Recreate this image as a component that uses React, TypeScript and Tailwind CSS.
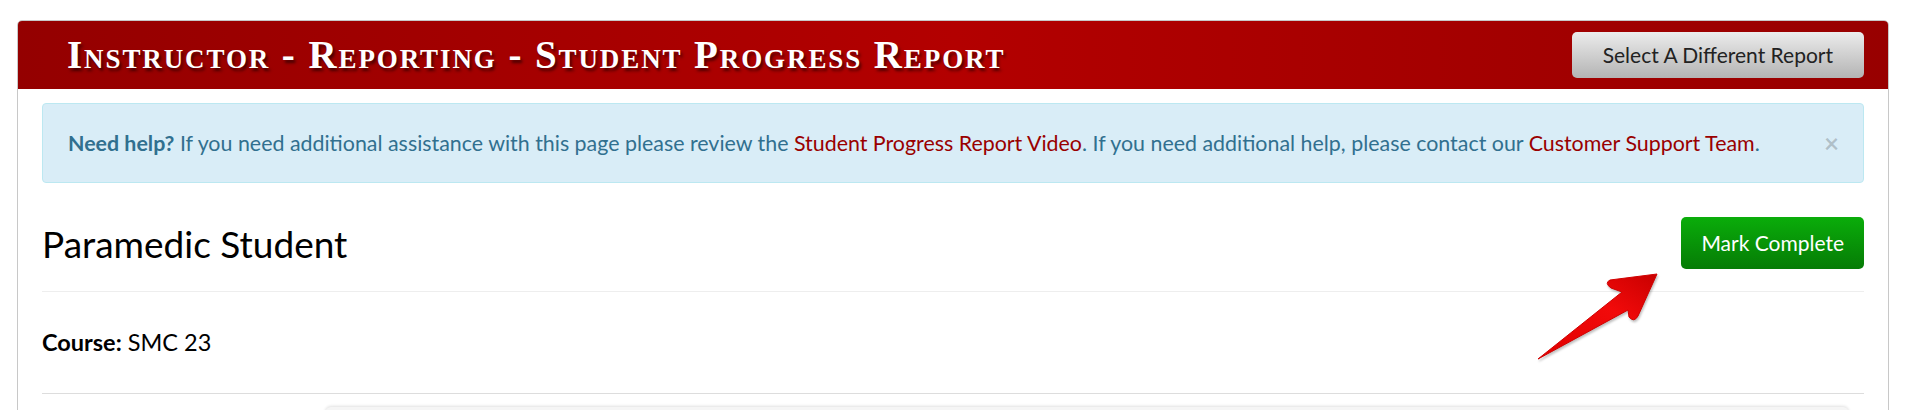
import React from "react";

const sans = "font-['Lato','Open_Sans',sans-serif]";

const Arrow = () => (
  <svg
    className="absolute left-[1530px] top-[266px] drop-shadow-[1px_2px_1px_rgba(0,0,0,0.25)]"
    width="136"
    height="100"
    viewBox="0 0 136 100"
  >
    <defs>
      <linearGradient id="arrowRed" x1="0" y1="1" x2="1" y2="0">
        <stop offset="0" stopColor="#e00000" />
        <stop offset="0.6" stopColor="#f20a0a" />
        <stop offset="1" stopColor="#c80000" />
      </linearGradient>
    </defs>
    <path
      d="M8,93 L92,26 L81,22 Q74,17 80,14 L127,8 L108,50 Q104,57 99,51 L98,44 Z"
      fill="url(#arrowRed)"
      stroke="#d00000"
      strokeWidth="1"
      strokeLinejoin="round"
    />
  </svg>
);

export default function App() {
  return (
    <div className={`relative min-h-[410px] bg-white pt-[20px] ${sans}`}>
      <div className="ml-[17px] mr-[27px] overflow-hidden rounded-t-[5px] border border-[#c8c8c8]">
        {/* header */}
        <div className="flex h-[68px] items-center justify-between bg-gradient-to-r from-[#940000] via-[#b30000] to-[#980000] pl-[49px] pr-[24px]">
          <h1 className="font-['Liberation_Serif',serif] text-[39px] font-bold tracking-[1.9px] text-white [font-variant-caps:small-caps] [text-shadow:2px_3px_3px_rgba(0,0,0,0.55)]">
            Instructor - Reporting - Student Progress Report
          </h1>
          <button className="h-[46px] rounded-[5px] bg-gradient-to-b from-[#ececec] to-[#b4b4b4] px-[31px] text-[21px] text-[#222]">
            Select A Different Report
          </button>
        </div>

        <div className="px-[24px] pt-[14px]">
          {/* help alert */}
          <div className="flex h-[80px] items-center justify-between rounded-[4px] border border-[#bce8f1] bg-[#d9edf7] pl-[25px] pr-[24px] text-[21.4px] text-[#31708f]">
            <p>
              <span className="font-bold">Need help?</span> If you need
              additional assistance with this page please review the{" "}
              <a className="text-[#990000]">Student Progress Report Video</a>.
              If you need additional help, please contact our{" "}
              <a className="text-[#990000]">Customer Support Team</a>.
            </p>
            <span className="text-[26px] font-bold leading-none text-black/20">
              ×
            </span>
          </div>

          {/* student heading */}
          <div className="flex items-center justify-between border-b border-[#eeeeee] pb-[22px] pt-[34px]">
            <h2 className="text-[37px] leading-none text-black">
              Paramedic Student
            </h2>
            <button className="h-[52px] rounded-[5px] bg-gradient-to-b from-[#0aad0a] to-[#067c06] px-[20px] text-[21px] text-white">
              Mark Complete
            </button>
          </div>

          <div className="flex h-[102px] items-center border-b border-[#dddddd] text-[23.5px] text-black">
            <span className="font-bold">Course:</span>
            <span className="ml-[6px]">SMC 23</span>
          </div>

          <div className="grid grid-cols-[283px_1fr] pt-[13px]">
            <div />
            <div className="mr-[15px] h-[60px] rounded-[6px] bg-[#f5f5f5] shadow-[0_-1px_3px_rgba(0,0,0,0.12)]" />
          </div>
        </div>
      </div>
      <Arrow />
    </div>
  );
}
